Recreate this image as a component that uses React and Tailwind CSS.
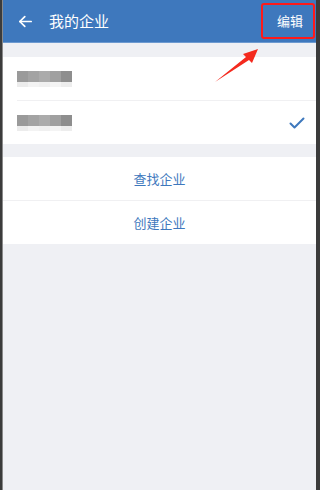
import React from "react";

const cjk = { fontFamily: '"Noto Sans CJK SC", "Noto Sans", sans-serif' };

const BlurName = () => (
  <div className="flex flex-col">
    <div className="flex">
      <div className="w-[11px] h-[11px] bg-[#9a9a9a]" />
      <div className="w-[11px] h-[11px] bg-[#a3a3a3]" />
      <div className="w-[11px] h-[11px] bg-[#ababab]" />
      <div className="w-[11px] h-[11px] bg-[#a0a0a0]" />
      <div className="w-[11px] h-[11px] bg-[#8e8e8e]" />
    </div>
    <div className="flex">
      <div className="w-[11px] h-[5px] bg-[#ececec]" />
      <div className="w-[11px] h-[5px] bg-[#f3f3f3]" />
      <div className="w-[11px] h-[5px] bg-[#f0f0f0]" />
      <div className="w-[11px] h-[5px] bg-[#f4f4f4]" />
      <div className="w-[11px] h-[5px] bg-[#ededed]" />
    </div>
  </div>
);

export default function App() {
  return (
    <div className="w-[320px] h-[490px] bg-[#3b3b3b] flex overflow-hidden" style={cjk}>
      <div className="ml-[2px] w-px bg-[#8a8a8a]" />
      <div className="relative w-[313px] h-full bg-[#eff0f4] flex flex-col">
        <div className="h-[43px] bg-[#3e78bd] flex items-center pl-[14px] pr-[13px] border-b border-[#6d9ad0]">
          <svg width="17" height="17" viewBox="0 0 24 24" fill="none" stroke="white" strokeWidth="2.4" strokeLinecap="round" strokeLinejoin="round">
            <path d="M20 12H4" />
            <path d="M11 5l-7 7 7 7" />
          </svg>
          <span className="ml-[15px] text-[15px] text-white">我的企业</span>
          <span className="ml-auto text-[13px] text-white">编辑</span>
        </div>

        <div className="mt-[14px] bg-white flex flex-col">
          <div className="pl-[14px]">
            <div className="h-[44px] flex items-center border-b border-[#f0f0f2]">
              <BlurName />
            </div>
          </div>
          <div className="h-[43px] flex items-center pl-[14px] pr-[11px] justify-between">
            <BlurName />
            <svg width="16" height="12" viewBox="0 0 16 12" fill="none" stroke="#3e78bd" strokeWidth="2" strokeLinecap="round" strokeLinejoin="round">
              <path d="M1.5 6.5l4 4L14.5 1.5" />
            </svg>
          </div>
        </div>

        <div className="mt-[13px] bg-white flex flex-col">
          <div className="h-[44px] flex items-center justify-center border-b border-[#f0f0f2] text-[13px] text-[#3e78bd]">
            查找企业
          </div>
          <div className="h-[43px] flex items-center justify-center text-[13px] text-[#3e78bd]">
            创建企业
          </div>
        </div>

        <div className="absolute left-[258px] top-[3px] w-[54px] h-[36px] border-2 border-[#ff1a1a] rounded-[3px]" />
        <svg className="absolute left-[205px] top-[45px]" width="50" height="42" viewBox="0 0 50 42">
          <path d="M7 37 L38 12 L35 9 L50 4 L44 18 L41 15 Z" fill="#f42a1e" />
        </svg>
      </div>
    </div>
  );
}
